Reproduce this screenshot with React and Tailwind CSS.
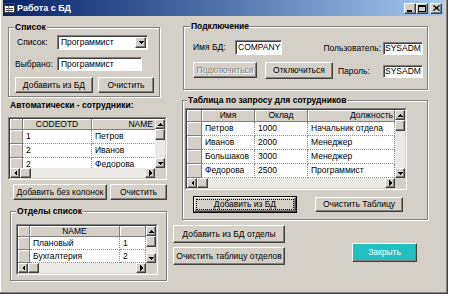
const raised = "bg-[#d4d0c8] border border-t-white border-l-white border-r-[#404040] border-b-[#404040] shadow-[inset_-1px_-1px_0_#808080]";
const sunken = "bg-white border border-t-[#808080] border-l-[#808080] border-r-white border-b-white shadow-[inset_1px_1px_0_#404040]";
const head = "bg-[#d4d0c8] border-r border-b border-r-[#808080] border-b-[#808080] shadow-[inset_1px_1px_0_white] flex items-center shrink-0 whitespace-nowrap overflow-hidden";
const cell = "bg-white border-r border-b border-dotted border-[#8c8c8c] flex items-center pl-[3px] shrink-0 whitespace-nowrap overflow-hidden";

function Tri({ dir }) {
    const pts = {
        up: "3,0 6,3 0,3",
        down: "0,0 6,0 3,3",
        left: "3,0 3,6 0,3",
        right: "0,0 3,3 0,6",
    }[dir];
    const vertical = dir === "up" || dir === "down";
    return (
        <svg width={vertical ? 6 : 3} height={vertical ? 3 : 6} shapeRendering="crispEdges">
            <polygon points={pts} fill="#000" />
        </svg>
    );
}

function ArrowBtn({ dir }) {
    return (
        <div className={`${raised} w-[10px] h-[10px] flex items-center justify-center shrink-0`}>
            <Tri dir={dir} />
        </div>
    );
}

function VScroll() {
    return (
        <div className="flex flex-col w-[10px] shrink-0">
            <ArrowBtn dir="up" />
            <div className={`${raised} h-[11px] shrink-0`} />
            <div className="flex-1 bg-[#ebe9e5]" />
            <ArrowBtn dir="down" />
        </div>
    );
}

function HScroll() {
    return (
        <div className="flex flex-1 h-[10px]">
            <ArrowBtn dir="left" />
            <div className={`${raised} w-[11px] shrink-0`} />
            <div className="flex-1 bg-[#ebe9e5]" />
            <ArrowBtn dir="right" />
        </div>
    );
}

function Grid({ className, ind, cols, rows, headH, rowH }) {
    return (
        <div className={`border border-t-[#808080] border-l-[#808080] border-r-white border-b-white shrink-0 ${className}`}>
            <div className="w-full h-full border border-t-[#404040] border-l-[#404040] border-r-[#d4d0c8] border-b-[#d4d0c8] flex flex-col bg-[#d4d0c8]">
                <div className="flex flex-1 min-h-0">
                    <div className="flex-1 min-w-0 overflow-hidden flex flex-col">
                        <div className={`flex shrink-0 ${headH}`}>
                            <div className={`${head} ${ind}`} />
                            {cols.map((c, key) => (
                                <div key={key} className={`${head} ${c.w} ${c.align ?? "justify-center"}`}>{c.label}</div>
                            ))}
                        </div>
                        {rows.map((r, i) => (
                            <div key={i} className={`flex shrink-0 ${rowH}`}>
                                <div className={`${head} ${ind}`} />
                                {r.map((v, j) => (
                                    <div key={j} className={`${cell} ${cols[j].w}`}>{v}</div>
                                ))}
                            </div>
                        ))}
                    </div>
                    <VScroll />
                </div>
                <div className="flex h-[10px] shrink-0">
                    <HScroll />
                    <div className="w-[10px] bg-[#d4d0c8]" />
                </div>
            </div>
        </div>
    );
}

function Btn({ className = "", children, disabled }) {
    return (
        <div className={`${raised} flex items-center justify-center whitespace-nowrap shrink-0 ${disabled ? "text-[#808080] [text-shadow:1px_1px_0_#fff]" : ""} ${className}`}>
            {children}
        </div>
    );
}

function Group({ title, className, legendClass, children }) {
    return (
        <fieldset className={`border border-[#808080] shadow-[1px_1px_0_white,inset_1px_1px_0_white] shrink-0 ${className}`}>
            <legend className={`font-bold leading-[11px] bg-[#d4d0c8] px-[1px] ${legendClass}`}>{title}</legend>
            {children}
        </fieldset>
    );
}

function TitleBtn({ children }) {
    return (
        <div className={`${raised} w-[12px] h-[11px] flex items-center justify-center`}>
            {children}
        </div>
    );
}

export default function App() {
    return (
        <div className="w-[450px] h-[296px] bg-white overflow-hidden font-['Liberation_Sans',Arial,sans-serif] text-[8.5px] leading-[11px] text-black">
            <div className="w-[448px] h-[294px] bg-[#d4d0c8] pl-[3px] pr-[3px] border-r border-b border-[#404040] shadow-[inset_-1px_-1px_0_#808080,inset_1px_0_0_white] flex flex-col">
                <div className="h-[16px] shrink-0 bg-linear-to-r from-[#0a246a] to-[#a6caf0] flex items-center">
                    <svg width="11" height="10" className="ml-[1px]" shapeRendering="crispEdges">
                        <rect x="0.5" y="0.5" width="10" height="9" fill="#fff" stroke="#404040" />
                        <rect x="1" y="1" width="9" height="2" fill="#0a246a" />
                        <line x1="2" y1="5" x2="9" y2="5" stroke="#404040" />
                        <line x1="2" y1="7" x2="9" y2="7" stroke="#404040" />
                        <line x1="4" y1="3" x2="4" y2="9" stroke="#808080" />
                    </svg>
                    <span className="ml-[2px] text-white font-bold text-[9px]">Работа с БД</span>
                    <div className="ml-auto mr-[2px] flex">
                        <TitleBtn>
                            <svg width="6" height="7" shapeRendering="crispEdges"><rect x="0" y="5" width="5" height="2" fill="#000" /></svg>
                        </TitleBtn>
                        <TitleBtn>
                            <svg width="8" height="7" shapeRendering="crispEdges"><rect x="0.5" y="0.5" width="7" height="6" fill="none" stroke="#000" /><rect x="0" y="0" width="8" height="2" fill="#000" /></svg>
                        </TitleBtn>
                        <div className="ml-[2px]">
                            <TitleBtn>
                                <svg width="7" height="6"><path d="M0.5 0.5 L6.5 5.5 M6.5 0.5 L0.5 5.5" stroke="#000" strokeWidth="1.4" /></svg>
                            </TitleBtn>
                        </div>
                    </div>
                </div>

                <div className="flex flex-1 min-h-0">
                    {/* left column */}
                    <div className="ml-[5px] w-[160px] flex flex-col shrink-0">
                        <Group title="Список" className="mt-[6px] w-[152px] h-[75px]" legendClass="ml-[5px]">
                            <div className="flex items-center h-[15px] mt-[2px]">
                                <span className="ml-[8px] w-[40px]">Список:</span>
                                <div className={`${sunken} w-[91px] h-[15px] flex items-center`}>
                                    <span className="pl-[3px] flex-1">Программист</span>
                                    <div className={`${raised} w-[11px] h-[11px] mr-[1px] flex items-center justify-center`}>
                                        <Tri dir="down" />
                                    </div>
                                </div>
                            </div>
                            <div className="flex items-center h-[14px] mt-[7px]">
                                <span className="ml-[6px] w-[42px]">Выбрано:</span>
                                <div className={`${sunken} w-[85px] h-[14px] flex items-center pl-[3px]`}>Программист</div>
                            </div>
                            <div className="flex mt-[6px]">
                                <Btn className="ml-[6px] w-[78px] h-[16px]">Добавить из БД</Btn>
                                <Btn className="ml-[5px] w-[56px] h-[16px]">Очистить</Btn>
                            </div>
                        </Group>

                        <div className="mt-[3px] ml-[2px] font-bold">Автоматически - сотрудники:</div>

                        <Grid
                            className="mt-[6px] w-[159px] h-[63px]"
                            ind="w-[13px]"
                            headH="h-[11px]"
                            rowH="h-[14px]"
                            cols={[
                                { w: "w-[69px]", label: "CODEOTD" },
                                { w: "w-[64px]", label: "NAME", align: "justify-end pr-[2px]" },
                            ]}
                            rows={[["1", "Петров"], ["2", "Иванов"], ["2", "Федорова"]]}
                        />

                        <div className="flex mt-[4px]">
                            <Btn className="ml-[5px] w-[94px] h-[16px]">Добавить без колонок</Btn>
                            <Btn className="ml-[3px] w-[57px] h-[16px]">Очистить</Btn>
                        </div>

                        <Group title="Отделы список" className="mt-[6px] ml-[2px] w-[157px] h-[75px]" legendClass="ml-[5px]">
                            <Grid
                                className="mt-[7px] ml-[5px] w-[142px] h-[51px]"
                                ind="w-[12px]"
                                headH="h-[11px]"
                                rowH="h-[13px]"
                                cols={[
                                    { w: "w-[90px]", label: "NAME" },
                                    { w: "w-[26px]", label: "" },
                                ]}
                                rows={[["Плановый", "1"], ["Бухгалтерия", "2"]]}
                            />
                        </Group>
                    </div>

                    {/* right column */}
                    <div className="ml-[5px] flex-1 flex flex-col">
                        <Group title="Подключение" className="mt-[5px] ml-[10px] w-[245px] h-[69px]" legendClass="ml-[6px]">
                            <div className="flex items-start mt-[8px]">
                                <span className="ml-[9px] w-[42px] h-[15px] flex items-center">Имя БД:</span>
                                <div className={`${sunken} w-[47px] h-[15px] flex items-center pl-[2px]`}>COMPANY</div>
                                <span className="mt-[2px] w-[100px] h-[13px] flex items-center justify-end pr-[1px]">Пользователь:</span>
                                <div className={`${sunken} mt-[2px] ml-[1px] w-[40px] h-[13px] flex items-center pl-[1px]`}>SYSADM</div>
                            </div>
                            <div className="flex items-start mt-[7px]">
                                <Btn disabled className="ml-[9px] w-[64px] h-[16px]">Подключиться</Btn>
                                <Btn className="ml-[8px] w-[68px] h-[17px]">Отключиться</Btn>
                                <span className="ml-[5px] mt-[3px] w-[45px] h-[13px] flex items-center">Пароль:</span>
                                <div className={`${sunken} mt-[3px] w-[40px] h-[13px] flex items-center pl-[1px]`}>SYSADM</div>
                            </div>
                        </Group>

                        <Group title="Таблица по запросу для сотрудников" className="mt-[5px] ml-[9px] w-[246px] h-[125px]" legendClass="ml-[4px]">
                            <Grid
                                className="mt-[2px] ml-[2px] w-[222px] h-[82px]"
                                ind="w-[15px]"
                                headH="h-[12px]"
                                rowH="h-[14px]"
                                cols={[
                                    { w: "w-[53px]", label: "Имя" },
                                    { w: "w-[53px]", label: "Оклад" },
                                    { w: "w-[87px]", label: "Должность", align: "justify-end pr-[1px]" },
                                ]}
                                rows={[
                                    ["Петров", "1000", "Начальник отдела"],
                                    ["Иванов", "2000", "Менеджер"],
                                    ["Большаков", "3000", "Менеджер"],
                                    ["Федорова", "2500", "Программист"],
                                ]}
                            />
                            <div className="flex mt-[6px]">
                                <div className="ml-[10px] w-[104px] h-[17px] border border-black shrink-0">
                                    <div className={`${raised} w-full h-full p-[1px]`}>
                                        <div className="w-full h-full border border-dotted border-black flex items-center justify-center leading-[9px]">Добавить из БД</div>
                                    </div>
                                </div>
                                <Btn className="ml-[18px] mt-[1px] w-[88px] h-[15px]">Очистить Таблицу</Btn>
                            </div>
                        </Group>

                        <div className="flex items-start mt-[5px]">
                            <div className="flex flex-col gap-[4px]">
                                <Btn className="w-[112px] h-[18px]">Добавить из БД отделы</Btn>
                                <Btn className="w-[112px] h-[18px]">Очистить таблицу отделов</Btn>
                            </div>
                            <div className="ml-[67px] mt-[18px] w-[65px] h-[19px] bg-[#22c0c1] border border-t-white border-l-white border-r-[#404040] border-b-[#404040] shadow-[inset_-1px_-1px_0_#808080] text-white flex items-center justify-center">
                                Закрыть
                            </div>
                        </div>
                    </div>
                </div>
            </div>
        </div>
    );
}
